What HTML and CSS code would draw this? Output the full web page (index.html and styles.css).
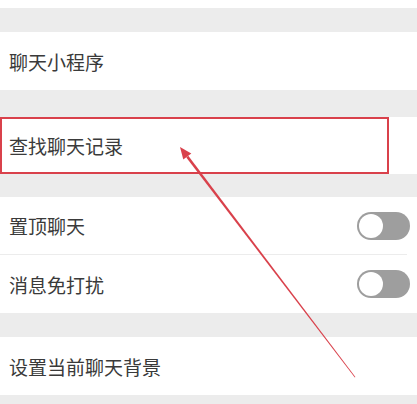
FILE: index.html
```html
<!DOCTYPE html>
<html lang="zh-CN">
<head>
<meta charset="utf-8">
<title>聊天设置</title>
<link rel="stylesheet" href="styles.css">
</head>
<body>
<div class="page">
  <div class="group top-cut"></div>
  <div class="group g1">
    <div class="row r58"><span class="label">聊天小程序</span></div>
  </div>
  <div class="group g2">
    <div class="row r57 marked">
      <span class="label">查找聊天记录</span>
      <div class="highlight"></div>
    </div>
  </div>
  <div class="group g3">
    <div class="row r57">
      <span class="label">置顶聊天</span>
      <div class="toggle"><div class="knob"></div></div>
    </div>
    <div class="sep"></div>
    <div class="row r58">
      <span class="label">消息免打扰</span>
      <div class="toggle"><div class="knob"></div></div>
    </div>
  </div>
  <div class="group g4">
    <div class="row r58"><span class="label">设置当前聊天背景</span></div>
  </div>
  <svg class="arrow" width="417" height="404" viewBox="0 0 417 404">
    <polygon points="186.3,157.4 188.3,155.8 355.4,377.0 354.8,377.4" fill="#d9414b"/>
    <polygon points="180,147 183.3,159.6 191.3,153.6" fill="#d9414b"/>
  </svg>
</div>
</body>
</html>
```
FILE: styles.css
```css
html, body {
  margin: 0;
  padding: 0;
}
body {
  background: #ececec;
  font-family: "Noto Sans CJK SC", "Noto Sans", sans-serif;
  color: #3a3a3a;
}
.page {
  position: relative;
  width: 417px;
  height: 404px;
  overflow: hidden;
  background: #ececec;
}
.group {
  background: #ffffff;
}
.top-cut {
  height: 8px;
}
.g1 { margin-top: 24px; }
.g2 { margin-top: 27px; }
.g3 { margin-top: 23px; }
.g4 { margin-top: 24px; }
.row {
  display: flex;
  align-items: center;
  justify-content: space-between;
  padding: 0 7px 0 9px;
  box-sizing: border-box;
}
.r57 { height: 57px; }
.r58 { height: 58px; }
.label {
  font-size: 19px;
  line-height: 1;
  letter-spacing: 0;
}
.marked {
  position: relative;
}
.highlight {
  position: absolute;
  left: 0;
  top: 0;
  width: 389px;
  height: 57px;
  box-sizing: border-box;
  border: 2px solid #d9414b;
}
.sep {
  height: 1px;
  background: #ececec;
  margin-right: 10px;
}
.toggle {
  width: 53px;
  height: 28px;
  border-radius: 14px;
  background: #9e9e9e;
  display: flex;
  align-items: center;
  padding-left: 2px;
  box-sizing: border-box;
}
.knob {
  width: 24px;
  height: 24px;
  border-radius: 50%;
  background: #ffffff;
}
.arrow {
  position: absolute;
  left: 0;
  top: 0;
}
```
